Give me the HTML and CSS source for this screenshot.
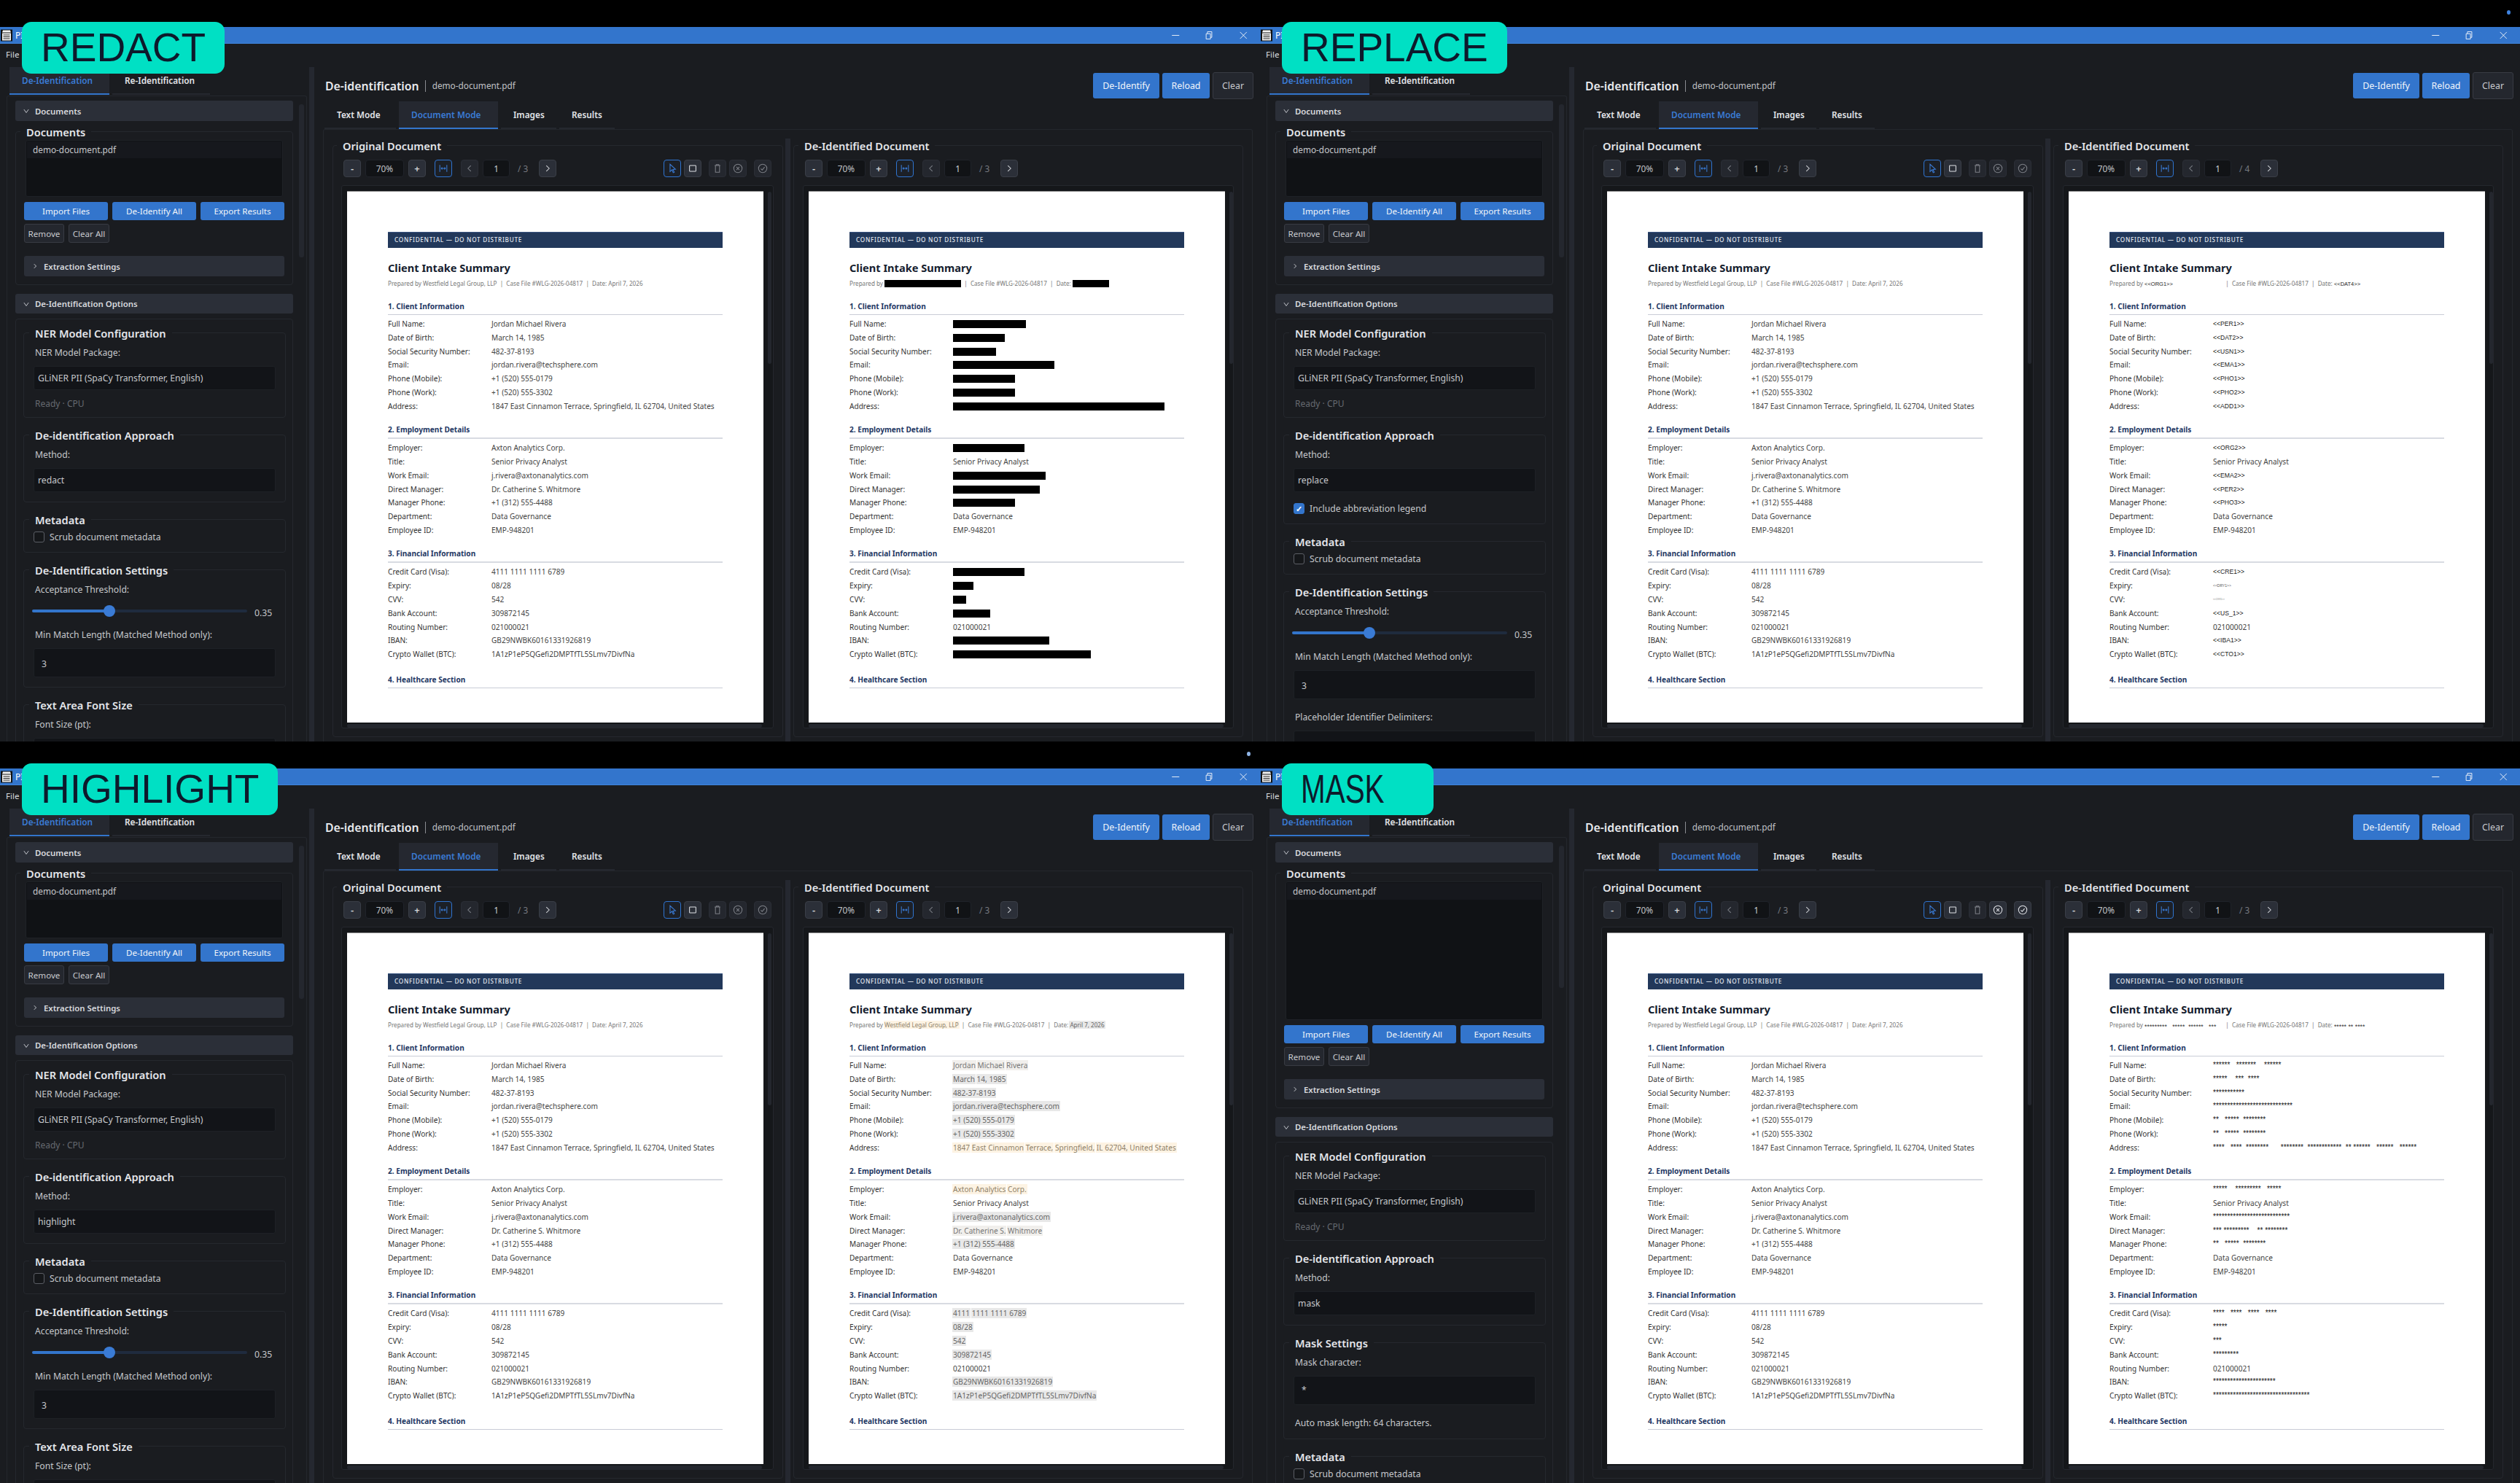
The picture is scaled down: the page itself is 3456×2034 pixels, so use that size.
FILE: index.html
```html
<!DOCTYPE html>
<html lang="en">
<head>
<meta charset="utf-8">
<title>De-identification methods</title>
<link rel="stylesheet" href="styles.css">
</head>
<body>
<svg class="sprite" aria-hidden="true">
<symbol id="fit" viewBox="0 0 16 16"><path d="M2.5 2.5v11M13.5 2.5v11M4.5 8h7M4.5 8l1.8-1.6M4.5 8l1.8 1.6M11.5 8L9.700 6.400M11.500 8L9.700 9.600"/></symbol>
<symbol id="cur" viewBox="0 0 16 16"><path d="M4.500 1.500v11.500l3-2.800 2 4.500 1.600-.7-2-4.300 3.900-.4z"/></symbol>
<symbol id="rct" viewBox="0 0 16 16"><rect x="3" y="3.500" width="10" height="9" rx=".8"/></symbol>
<symbol id="trh" viewBox="0 0 16 16"><path d="M3.500 3.500h9M6 3.500V2h4v1.500M4.800 3.500V14h6.400V3.500"/></symbol>
<symbol id="xc" viewBox="0 0 16 16"><circle cx="8" cy="8" r="6.500"/><path d="M5.700 5.700l4.600 4.600M10.300 5.700l-4.600 4.600"/></symbol>
<symbol id="cc" viewBox="0 0 16 16"><circle cx="8" cy="8" r="6.500"/><path d="M5 8.300l2.200 2.200L11 5.800"/></symbol>
<symbol id="lt" viewBox="0 0 16 16"><path d="M10 3.500L5.500 8l4.500 4.500"/></symbol>
<symbol id="gt" viewBox="0 0 16 16"><path d="M6 3.500L10.500 8 6 12.500"/></symbol>
<symbol id="dn" viewBox="0 0 16 16"><path d="M3 5l5 7 5-7"/></symbol>
<symbol id="min" viewBox="0 0 12 12"><path d="M.500 6h11"/></symbol>
<symbol id="res" viewBox="0 0 12 12"><path d="M1.500 3.500h6.500v8H1.500zM3.500 3.500V.500h6.500v8.500H8"/></symbol>
<symbol id="cls" viewBox="0 0 12 12"><path d="M1 1l10 10M11 1L1 11"/></symbol>
<symbol id="app" viewBox="0 0 16 16"><path class="app-b" d="M0 0h16v16H0z"/><path class="app-w" d="M3 1h10l1 3H2zM2 5h12v10H2z"/><path class="app-l" d="M3.500 7.500h9M3.500 10h9M3.500 12.500h9"/></symbol>
</svg>
<main class="app">

<section class="win">
<div class="label">REDACT</div>
<header class="tbar"><svg class="appic"><use href="#app"/></svg><span class="ttl">PI</span><div class="wc"><svg><use href="#min"/></svg><svg><use href="#res"/></svg><svg><use href="#cls"/></svg></div></header>
<div class="menu">File</div>
<div class="main">
<aside class="side">
<div class="stabs"><div class="tab act">De-Identification</div><div class="tab">Re-Identification</div></div>
<div class="sframe"><div class="sscroll">
<div class="head"><svg class="chev"><use href="#dn"/></svg>Documents</div>
<div class="grp docs"><div class="gt">Documents</div>
<div class="list"><div class="li">demo-document.pdf</div></div>
<div class="brow"><button class="btn pri">Import Files</button><button class="btn pri">De-Identify All</button><button class="btn pri">Export Results</button></div>
<div class="brow2"><button class="btn sec rm">Remove</button><button class="btn sec ca">Clear All</button></div>
<div class="head sub"><svg class="chev"><use href="#gt"/></svg>Extraction Settings</div>
</div>
<div class="head opt"><svg class="chev"><use href="#dn"/></svg>De-Identification Options</div>
<div class="grp big">
<div class="grp in ner"><div class="gt">NER Model Configuration</div><div class="lb">NER Model Package:</div><div class="cb">GLiNER PII (SpaCy Transformer, English)</div><div class="note">Ready · CPU</div></div>
<div class="grp in"><div class="gt">De-identification Approach</div><div class="lb">Method:</div><div class="cb">redact</div></div>
<div class="grp in"><div class="gt">Metadata</div><label class="ck"><span class="box"></span>Scrub document metadata</label></div>
<div class="grp in"><div class="gt">De-Identification Settings</div><div class="lb">Acceptance Threshold:</div>
<div class="sl"><div class="track"><div class="fill"></div><div class="knob"></div></div><span class="val">0.35</span></div>
<div class="lb ml">Min Match Length (Matched Method only):</div><div class="cb tall">3</div></div>
<div class="grp in"><div class="gt">Text Area Font Size</div><div class="lb">Font Size (pt):</div><div class="cb tall">10</div></div>
</div>
</div><div class="sb"></div></div>
</aside>
<div class="split"></div>
<div class="content">
<div class="chead"><h1 class="ctitle">De-identification</h1><span class="cfile">demo-document.pdf</span><div class="acts"><button class="btn pri big1">De-Identify</button><button class="btn pri big2">Reload</button><button class="btn sec big3">Clear</button></div></div>
<nav class="ctabs"><div class="tab">Text Mode</div><div class="tab act">Document Mode</div><div class="tab">Images</div><div class="tab">Results</div></nav>
<div class="frame">
<div class="vg"><div class="gt">Original Document</div>
<div class="tb"><button class="tbtn">-</button><span class="zf">70%</span><button class="tbtn">+</button><button class="tbtn on gp"><svg><use href="#fit"/></svg></button><button class="tbtn dim gp"><svg><use href="#lt"/></svg></button><span class="pg">1</span><span class="cnt">/ 3</span><button class="tbtn"><svg><use href="#gt"/></svg></button><div class="tr"><button class="tbtn on"><svg><use href="#cur"/></svg></button><button class="tbtn lit"><svg><use href="#rct"/></svg></button><button class="tbtn dim gp"><svg><use href="#trh"/></svg></button><button class="tbtn dim"><svg><use href="#xc"/></svg></button><button class="tbtn dim gp"><svg><use href="#cc"/></svg></button></div></div>
<div class="view"><div class="vrow"><article class="page"><div class="ban">CONFIDENTIAL — DO NOT DISTRIBUTE</div><h2 class="dt">Client Intake Summary</h2><p class="ds">Prepared by Westfield Legal Group, LLP &nbsp;|&nbsp; Case File #WLG-2026-04817 &nbsp;|&nbsp; Date: April 7, 2026</p>
<h3 class="sec1">1. Client Information</h3><dl class="rows"><dt>Full Name:</dt><dd>Jordan Michael Rivera</dd><dt>Date of Birth:</dt><dd>March 14, 1985</dd><dt>Social Security Number:</dt><dd>482-37-8193</dd><dt>Email:</dt><dd>jordan.rivera@techsphere.com</dd><dt>Phone (Mobile):</dt><dd>+1 (520) 555-0179</dd><dt>Phone (Work):</dt><dd>+1 (520) 555-3302</dd><dt>Address:</dt><dd>1847 East Cinnamon Terrace, Springfield, IL 62704, United States</dd></dl>
<h3>2. Employment Details</h3><dl class="rows"><dt>Employer:</dt><dd>Axton Analytics Corp.</dd><dt>Title:</dt><dd>Senior Privacy Analyst</dd><dt>Work Email:</dt><dd>j.rivera@axtonanalytics.com</dd><dt>Direct Manager:</dt><dd>Dr. Catherine S. Whitmore</dd><dt>Manager Phone:</dt><dd>+1 (312) 555-4488</dd><dt>Department:</dt><dd>Data Governance</dd><dt>Employee ID:</dt><dd>EMP-948201</dd></dl>
<h3>3. Financial Information</h3><dl class="rows"><dt>Credit Card (Visa):</dt><dd>4111 1111 1111 6789</dd><dt>Expiry:</dt><dd>08/28</dd><dt>CVV:</dt><dd>542</dd><dt>Bank Account:</dt><dd>309872145</dd><dt>Routing Number:</dt><dd>021000021</dd><dt>IBAN:</dt><dd>GB29NWBK60161331926819</dd><dt>Crypto Wallet (BTC):</dt><dd>1A1zP1eP5QGefi2DMPTfTL5SLmv7DivfNa</dd></dl>
<h3 class="sec1">4. Healthcare Section</h3></article><div class="vs"></div></div><div class="hs"></div></div></div>
<div class="vsplit"></div>
<div class="vg"><div class="gt">De-Identified Document</div>
<div class="tb"><button class="tbtn">-</button><span class="zf">70%</span><button class="tbtn">+</button><button class="tbtn on gp"><svg><use href="#fit"/></svg></button><button class="tbtn dim gp"><svg><use href="#lt"/></svg></button><span class="pg">1</span><span class="cnt">/ 3</span><button class="tbtn"><svg><use href="#gt"/></svg></button></div>
<div class="view"><div class="vrow"><article class="page"><div class="ban">CONFIDENTIAL — DO NOT DISTRIBUTE</div><h2 class="dt">Client Intake Summary</h2><p class="ds">Prepared by <span class="bar" style="width:105px"></span> &nbsp;|&nbsp; Case File #WLG-2026-04817 &nbsp;|&nbsp; Date: <span class="bar" style="width:50px"></span></p>
<h3 class="sec1">1. Client Information</h3><dl class="rows"><dt>Full Name:</dt><dd><span class="bar" style="width:100px"></span></dd><dt>Date of Birth:</dt><dd><span class="bar" style="width:71px"></span></dd><dt>Social Security Number:</dt><dd><span class="bar" style="width:59px"></span></dd><dt>Email:</dt><dd><span class="bar" style="width:139px"></span></dd><dt>Phone (Mobile):</dt><dd><span class="bar" style="width:85px"></span></dd><dt>Phone (Work):</dt><dd><span class="bar" style="width:85px"></span></dd><dt>Address:</dt><dd><span class="bar" style="width:290px"></span></dd></dl>
<h3>2. Employment Details</h3><dl class="rows"><dt>Employer:</dt><dd><span class="bar" style="width:98px"></span></dd><dt>Title:</dt><dd>Senior Privacy Analyst</dd><dt>Work Email:</dt><dd><span class="bar" style="width:127px"></span></dd><dt>Direct Manager:</dt><dd><span class="bar" style="width:119px"></span></dd><dt>Manager Phone:</dt><dd><span class="bar" style="width:85px"></span></dd><dt>Department:</dt><dd>Data Governance</dd><dt>Employee ID:</dt><dd>EMP-948201</dd></dl>
<h3>3. Financial Information</h3><dl class="rows"><dt>Credit Card (Visa):</dt><dd><span class="bar" style="width:98px"></span></dd><dt>Expiry:</dt><dd><span class="bar" style="width:28px"></span></dd><dt>CVV:</dt><dd><span class="bar" style="width:18px"></span></dd><dt>Bank Account:</dt><dd><span class="bar" style="width:51px"></span></dd><dt>Routing Number:</dt><dd>021000021</dd><dt>IBAN:</dt><dd><span class="bar" style="width:132px"></span></dd><dt>Crypto Wallet (BTC):</dt><dd><span class="bar" style="width:189px"></span></dd></dl>
<h3 class="sec1">4. Healthcare Section</h3></article><div class="vs"></div></div><div class="hs"></div></div></div>
</div>
</div>
</div>
</section>

<section class="win">
<div class="label">REPLACE</div><span class="dot"></span>
<header class="tbar"><svg class="appic"><use href="#app"/></svg><span class="ttl">PI</span><div class="wc"><svg><use href="#min"/></svg><svg><use href="#res"/></svg><svg><use href="#cls"/></svg></div></header>
<div class="menu">File</div>
<div class="main">
<aside class="side">
<div class="stabs"><div class="tab act">De-Identification</div><div class="tab">Re-Identification</div></div>
<div class="sframe"><div class="sscroll">
<div class="head"><svg class="chev"><use href="#dn"/></svg>Documents</div>
<div class="grp docs"><div class="gt">Documents</div>
<div class="list"><div class="li">demo-document.pdf</div></div>
<div class="brow"><button class="btn pri">Import Files</button><button class="btn pri">De-Identify All</button><button class="btn pri">Export Results</button></div>
<div class="brow2"><button class="btn sec rm">Remove</button><button class="btn sec ca">Clear All</button></div>
<div class="head sub"><svg class="chev"><use href="#gt"/></svg>Extraction Settings</div>
</div>
<div class="head opt"><svg class="chev"><use href="#dn"/></svg>De-Identification Options</div>
<div class="grp big">
<div class="grp in ner"><div class="gt">NER Model Configuration</div><div class="lb">NER Model Package:</div><div class="cb">GLiNER PII (SpaCy Transformer, English)</div><div class="note">Ready · CPU</div></div>
<div class="grp in"><div class="gt">De-identification Approach</div><div class="lb">Method:</div><div class="cb">replace</div><label class="ck leg"><span class="box on">✓</span>Include abbreviation legend</label></div>
<div class="grp in"><div class="gt">Metadata</div><label class="ck"><span class="box"></span>Scrub document metadata</label></div>
<div class="grp in"><div class="gt">De-Identification Settings</div><div class="lb">Acceptance Threshold:</div>
<div class="sl"><div class="track"><div class="fill"></div><div class="knob"></div></div><span class="val">0.35</span></div>
<div class="lb ml">Min Match Length (Matched Method only):</div><div class="cb tall">3</div>
<div class="lb ml">Placeholder Identifier Delimiters:</div><div class="cb tall">Full format</div></div>
</div>
</div><div class="sb"></div></div>
</aside>
<div class="split"></div>
<div class="content">
<div class="chead"><h1 class="ctitle">De-identification</h1><span class="cfile">demo-document.pdf</span><div class="acts"><button class="btn pri big1">De-Identify</button><button class="btn pri big2">Reload</button><button class="btn sec big3">Clear</button></div></div>
<nav class="ctabs"><div class="tab">Text Mode</div><div class="tab act">Document Mode</div><div class="tab">Images</div><div class="tab">Results</div></nav>
<div class="frame">
<div class="vg"><div class="gt">Original Document</div>
<div class="tb"><button class="tbtn">-</button><span class="zf">70%</span><button class="tbtn">+</button><button class="tbtn on gp"><svg><use href="#fit"/></svg></button><button class="tbtn dim gp"><svg><use href="#lt"/></svg></button><span class="pg">1</span><span class="cnt">/ 3</span><button class="tbtn"><svg><use href="#gt"/></svg></button><div class="tr"><button class="tbtn on"><svg><use href="#cur"/></svg></button><button class="tbtn lit"><svg><use href="#rct"/></svg></button><button class="tbtn dim gp"><svg><use href="#trh"/></svg></button><button class="tbtn dim"><svg><use href="#xc"/></svg></button><button class="tbtn dim gp"><svg><use href="#cc"/></svg></button></div></div>
<div class="view"><div class="vrow"><article class="page"><div class="ban">CONFIDENTIAL — DO NOT DISTRIBUTE</div><h2 class="dt">Client Intake Summary</h2><p class="ds">Prepared by Westfield Legal Group, LLP &nbsp;|&nbsp; Case File #WLG-2026-04817 &nbsp;|&nbsp; Date: April 7, 2026</p>
<h3 class="sec1">1. Client Information</h3><dl class="rows"><dt>Full Name:</dt><dd>Jordan Michael Rivera</dd><dt>Date of Birth:</dt><dd>March 14, 1985</dd><dt>Social Security Number:</dt><dd>482-37-8193</dd><dt>Email:</dt><dd>jordan.rivera@techsphere.com</dd><dt>Phone (Mobile):</dt><dd>+1 (520) 555-0179</dd><dt>Phone (Work):</dt><dd>+1 (520) 555-3302</dd><dt>Address:</dt><dd>1847 East Cinnamon Terrace, Springfield, IL 62704, United States</dd></dl>
<h3>2. Employment Details</h3><dl class="rows"><dt>Employer:</dt><dd>Axton Analytics Corp.</dd><dt>Title:</dt><dd>Senior Privacy Analyst</dd><dt>Work Email:</dt><dd>j.rivera@axtonanalytics.com</dd><dt>Direct Manager:</dt><dd>Dr. Catherine S. Whitmore</dd><dt>Manager Phone:</dt><dd>+1 (312) 555-4488</dd><dt>Department:</dt><dd>Data Governance</dd><dt>Employee ID:</dt><dd>EMP-948201</dd></dl>
<h3>3. Financial Information</h3><dl class="rows"><dt>Credit Card (Visa):</dt><dd>4111 1111 1111 6789</dd><dt>Expiry:</dt><dd>08/28</dd><dt>CVV:</dt><dd>542</dd><dt>Bank Account:</dt><dd>309872145</dd><dt>Routing Number:</dt><dd>021000021</dd><dt>IBAN:</dt><dd>GB29NWBK60161331926819</dd><dt>Crypto Wallet (BTC):</dt><dd>1A1zP1eP5QGefi2DMPTfTL5SLmv7DivfNa</dd></dl>
<h3 class="sec1">4. Healthcare Section</h3></article><div class="vs"></div></div><div class="hs"></div></div></div>
<div class="vsplit"></div>
<div class="vg"><div class="gt">De-Identified Document</div>
<div class="tb"><button class="tbtn">-</button><span class="zf">70%</span><button class="tbtn">+</button><button class="tbtn on gp"><svg><use href="#fit"/></svg></button><button class="tbtn dim gp"><svg><use href="#lt"/></svg></button><span class="pg">1</span><span class="cnt">/ 4</span><button class="tbtn"><svg><use href="#gt"/></svg></button></div>
<div class="view"><div class="vrow"><article class="page"><div class="ban">CONFIDENTIAL — DO NOT DISTRIBUTE</div><h2 class="dt">Client Intake Summary</h2><p class="ds">Prepared by <span class="slot ph ph7">&lt;&lt;ORG1&gt;&gt;</span> &nbsp;|&nbsp; Case File #WLG-2026-04817 &nbsp;|&nbsp; Date: <span class="ph ph7">&lt;&lt;DAT4&gt;&gt;</span></p>
<h3 class="sec1">1. Client Information</h3><dl class="rows"><dt>Full Name:</dt><dd class="ph">&lt;&lt;PER1&gt;&gt;</dd><dt>Date of Birth:</dt><dd class="ph">&lt;&lt;DAT2&gt;&gt;</dd><dt>Social Security Number:</dt><dd class="ph">&lt;&lt;USN1&gt;&gt;</dd><dt>Email:</dt><dd class="ph">&lt;&lt;EMA1&gt;&gt;</dd><dt>Phone (Mobile):</dt><dd class="ph">&lt;&lt;PHO1&gt;&gt;</dd><dt>Phone (Work):</dt><dd class="ph">&lt;&lt;PHO2&gt;&gt;</dd><dt>Address:</dt><dd class="ph">&lt;&lt;ADD1&gt;&gt;</dd></dl>
<h3>2. Employment Details</h3><dl class="rows"><dt>Employer:</dt><dd class="ph">&lt;&lt;ORG2&gt;&gt;</dd><dt>Title:</dt><dd>Senior Privacy Analyst</dd><dt>Work Email:</dt><dd class="ph">&lt;&lt;EMA2&gt;&gt;</dd><dt>Direct Manager:</dt><dd class="ph">&lt;&lt;PER2&gt;&gt;</dd><dt>Manager Phone:</dt><dd class="ph">&lt;&lt;PHO3&gt;&gt;</dd><dt>Department:</dt><dd>Data Governance</dd><dt>Employee ID:</dt><dd>EMP-948201</dd></dl>
<h3>3. Financial Information</h3><dl class="rows"><dt>Credit Card (Visa):</dt><dd class="ph">&lt;&lt;CRE1&gt;&gt;</dd><dt>Expiry:</dt><dd class="ph ph5">&lt;&lt;DRY1&gt;&gt;</dd><dt>CVV:</dt><dd class="ph ph3">&lt;&lt;CVV1&gt;&gt;</dd><dt>Bank Account:</dt><dd class="ph">&lt;&lt;US_1&gt;&gt;</dd><dt>Routing Number:</dt><dd>021000021</dd><dt>IBAN:</dt><dd class="ph">&lt;&lt;IBA1&gt;&gt;</dd><dt>Crypto Wallet (BTC):</dt><dd class="ph">&lt;&lt;CTO1&gt;&gt;</dd></dl>
<h3 class="sec1">4. Healthcare Section</h3></article><div class="vs"></div></div><div class="hs"></div></div></div>
</div>
</div>
</div>
</section>

<section class="win">
<div class="label">HIGHLIGHT</div><span class="dot d3"></span>
<header class="tbar"><svg class="appic"><use href="#app"/></svg><span class="ttl">PI</span><div class="wc"><svg><use href="#min"/></svg><svg><use href="#res"/></svg><svg><use href="#cls"/></svg></div></header>
<div class="menu">File</div>
<div class="main">
<aside class="side">
<div class="stabs"><div class="tab act">De-Identification</div><div class="tab">Re-Identification</div></div>
<div class="sframe"><div class="sscroll">
<div class="head"><svg class="chev"><use href="#dn"/></svg>Documents</div>
<div class="grp docs"><div class="gt">Documents</div>
<div class="list"><div class="li">demo-document.pdf</div></div>
<div class="brow"><button class="btn pri">Import Files</button><button class="btn pri">De-Identify All</button><button class="btn pri">Export Results</button></div>
<div class="brow2"><button class="btn sec rm">Remove</button><button class="btn sec ca">Clear All</button></div>
<div class="head sub"><svg class="chev"><use href="#gt"/></svg>Extraction Settings</div>
</div>
<div class="head opt"><svg class="chev"><use href="#dn"/></svg>De-Identification Options</div>
<div class="grp big">
<div class="grp in ner"><div class="gt">NER Model Configuration</div><div class="lb">NER Model Package:</div><div class="cb">GLiNER PII (SpaCy Transformer, English)</div><div class="note">Ready · CPU</div></div>
<div class="grp in"><div class="gt">De-identification Approach</div><div class="lb">Method:</div><div class="cb">highlight</div></div>
<div class="grp in"><div class="gt">Metadata</div><label class="ck"><span class="box"></span>Scrub document metadata</label></div>
<div class="grp in"><div class="gt">De-Identification Settings</div><div class="lb">Acceptance Threshold:</div>
<div class="sl"><div class="track"><div class="fill"></div><div class="knob"></div></div><span class="val">0.35</span></div>
<div class="lb ml">Min Match Length (Matched Method only):</div><div class="cb tall">3</div></div>
<div class="grp in"><div class="gt">Text Area Font Size</div><div class="lb">Font Size (pt):</div><div class="cb tall">10</div></div>
</div>
</div><div class="sb"></div></div>
</aside>
<div class="split"></div>
<div class="content">
<div class="chead"><h1 class="ctitle">De-identification</h1><span class="cfile">demo-document.pdf</span><div class="acts"><button class="btn pri big1">De-Identify</button><button class="btn pri big2">Reload</button><button class="btn sec big3">Clear</button></div></div>
<nav class="ctabs"><div class="tab">Text Mode</div><div class="tab act">Document Mode</div><div class="tab">Images</div><div class="tab">Results</div></nav>
<div class="frame">
<div class="vg"><div class="gt">Original Document</div>
<div class="tb"><button class="tbtn">-</button><span class="zf">70%</span><button class="tbtn">+</button><button class="tbtn on gp"><svg><use href="#fit"/></svg></button><button class="tbtn dim gp"><svg><use href="#lt"/></svg></button><span class="pg">1</span><span class="cnt">/ 3</span><button class="tbtn"><svg><use href="#gt"/></svg></button><div class="tr"><button class="tbtn on"><svg><use href="#cur"/></svg></button><button class="tbtn lit"><svg><use href="#rct"/></svg></button><button class="tbtn dim gp"><svg><use href="#trh"/></svg></button><button class="tbtn dim"><svg><use href="#xc"/></svg></button><button class="tbtn dim gp"><svg><use href="#cc"/></svg></button></div></div>
<div class="view"><div class="vrow"><article class="page"><div class="ban">CONFIDENTIAL — DO NOT DISTRIBUTE</div><h2 class="dt">Client Intake Summary</h2><p class="ds">Prepared by Westfield Legal Group, LLP &nbsp;|&nbsp; Case File #WLG-2026-04817 &nbsp;|&nbsp; Date: April 7, 2026</p>
<h3 class="sec1">1. Client Information</h3><dl class="rows"><dt>Full Name:</dt><dd>Jordan Michael Rivera</dd><dt>Date of Birth:</dt><dd>March 14, 1985</dd><dt>Social Security Number:</dt><dd>482-37-8193</dd><dt>Email:</dt><dd>jordan.rivera@techsphere.com</dd><dt>Phone (Mobile):</dt><dd>+1 (520) 555-0179</dd><dt>Phone (Work):</dt><dd>+1 (520) 555-3302</dd><dt>Address:</dt><dd>1847 East Cinnamon Terrace, Springfield, IL 62704, United States</dd></dl>
<h3>2. Employment Details</h3><dl class="rows"><dt>Employer:</dt><dd>Axton Analytics Corp.</dd><dt>Title:</dt><dd>Senior Privacy Analyst</dd><dt>Work Email:</dt><dd>j.rivera@axtonanalytics.com</dd><dt>Direct Manager:</dt><dd>Dr. Catherine S. Whitmore</dd><dt>Manager Phone:</dt><dd>+1 (312) 555-4488</dd><dt>Department:</dt><dd>Data Governance</dd><dt>Employee ID:</dt><dd>EMP-948201</dd></dl>
<h3>3. Financial Information</h3><dl class="rows"><dt>Credit Card (Visa):</dt><dd>4111 1111 1111 6789</dd><dt>Expiry:</dt><dd>08/28</dd><dt>CVV:</dt><dd>542</dd><dt>Bank Account:</dt><dd>309872145</dd><dt>Routing Number:</dt><dd>021000021</dd><dt>IBAN:</dt><dd>GB29NWBK60161331926819</dd><dt>Crypto Wallet (BTC):</dt><dd>1A1zP1eP5QGefi2DMPTfTL5SLmv7DivfNa</dd></dl>
<h3 class="sec1">4. Healthcare Section</h3></article><div class="vs"></div></div><div class="hs"></div></div></div>
<div class="vsplit"></div>
<div class="vg"><div class="gt">De-Identified Document</div>
<div class="tb"><button class="tbtn">-</button><span class="zf">70%</span><button class="tbtn">+</button><button class="tbtn on gp"><svg><use href="#fit"/></svg></button><button class="tbtn dim gp"><svg><use href="#lt"/></svg></button><span class="pg">1</span><span class="cnt">/ 3</span><button class="tbtn"><svg><use href="#gt"/></svg></button></div>
<div class="view"><div class="vrow"><article class="page"><div class="ban">CONFIDENTIAL — DO NOT DISTRIBUTE</div><h2 class="dt">Client Intake Summary</h2><p class="ds">Prepared by <mark class="o">Westfield</mark> <mark class="o">Legal</mark> <mark class="o">Group,</mark> <mark class="o">LLP</mark> &nbsp;|&nbsp; Case File #WLG-2026-04817 &nbsp;|&nbsp; Date: <mark class="g">April</mark> <mark class="g">7,</mark> <mark class="g">2026</mark></p>
<h3 class="sec1">1. Client Information</h3><dl class="rows"><dt>Full Name:</dt><dd><mark class="n">Jordan</mark> <mark class="n">Michael</mark> <mark class="n">Rivera</mark></dd><dt>Date of Birth:</dt><dd><mark class="g">March</mark> <mark class="g">14,</mark> <mark class="g">1985</mark></dd><dt>Social Security Number:</dt><dd><mark class="g">482-37-8193</mark></dd><dt>Email:</dt><dd><mark class="g">jordan.rivera@techsphere.com</mark></dd><dt>Phone (Mobile):</dt><dd><mark class="g">+1</mark> <mark class="g">(520)</mark> <mark class="g">555-0179</mark></dd><dt>Phone (Work):</dt><dd><mark class="g">+1</mark> <mark class="g">(520)</mark> <mark class="g">555-3302</mark></dd><dt>Address:</dt><dd><mark class="o">1847</mark> <mark class="o">East</mark> <mark class="o">Cinnamon</mark> <mark class="o">Terrace,</mark> <mark class="o">Springfield,</mark> <mark class="o">IL</mark> <mark class="o">62704,</mark> <mark class="o">United</mark> <mark class="o">States</mark></dd></dl>
<h3>2. Employment Details</h3><dl class="rows"><dt>Employer:</dt><dd><mark class="o">Axton</mark> <mark class="o">Analytics</mark> <mark class="o">Corp.</mark></dd><dt>Title:</dt><dd>Senior Privacy Analyst</dd><dt>Work Email:</dt><dd><mark class="g">j.rivera@axtonanalytics.com</mark></dd><dt>Direct Manager:</dt><dd><mark class="n">Dr.</mark> <mark class="n">Catherine</mark> <mark class="n">S.</mark> <mark class="n">Whitmore</mark></dd><dt>Manager Phone:</dt><dd><mark class="g">+1</mark> <mark class="g">(312)</mark> <mark class="g">555-4488</mark></dd><dt>Department:</dt><dd>Data Governance</dd><dt>Employee ID:</dt><dd>EMP-948201</dd></dl>
<h3>3. Financial Information</h3><dl class="rows"><dt>Credit Card (Visa):</dt><dd><mark class="g">4111</mark> <mark class="g">1111</mark> <mark class="g">1111</mark> <mark class="g">6789</mark></dd><dt>Expiry:</dt><dd><mark class="g">08/28</mark></dd><dt>CVV:</dt><dd><mark class="g">542</mark></dd><dt>Bank Account:</dt><dd><mark class="g">309872145</mark></dd><dt>Routing Number:</dt><dd>021000021</dd><dt>IBAN:</dt><dd><mark class="g">GB29NWBK60161331926819</mark></dd><dt>Crypto Wallet (BTC):</dt><dd><mark class="g">1A1zP1eP5QGefi2DMPTfTL5SLmv7DivfNa</mark></dd></dl>
<h3 class="sec1">4. Healthcare Section</h3></article><div class="vs"></div></div><div class="hs"></div></div></div>
</div>
</div>
</div>
</section>

<section class="win">
<div class="label lnarrow"><span>MASK</span></div>
<header class="tbar"><svg class="appic"><use href="#app"/></svg><span class="ttl">PI</span><div class="wc"><svg><use href="#min"/></svg><svg><use href="#res"/></svg><svg><use href="#cls"/></svg></div></header>
<div class="menu">File</div>
<div class="main">
<aside class="side">
<div class="stabs"><div class="tab act">De-Identification</div><div class="tab">Re-Identification</div></div>
<div class="sframe"><div class="sscroll">
<div class="head"><svg class="chev"><use href="#dn"/></svg>Documents</div>
<div class="grp docs"><div class="gt">Documents</div>
<div class="list tall-list"><div class="li">demo-document.pdf</div></div>
<div class="brow"><button class="btn pri">Import Files</button><button class="btn pri">De-Identify All</button><button class="btn pri">Export Results</button></div>
<div class="brow2"><button class="btn sec rm">Remove</button><button class="btn sec ca">Clear All</button></div>
<div class="head sub"><svg class="chev"><use href="#gt"/></svg>Extraction Settings</div>
</div>
<div class="head opt"><svg class="chev"><use href="#dn"/></svg>De-Identification Options</div>
<div class="grp big">
<div class="grp in ner"><div class="gt">NER Model Configuration</div><div class="lb">NER Model Package:</div><div class="cb">GLiNER PII (SpaCy Transformer, English)</div><div class="note">Ready · CPU</div></div>
<div class="grp in"><div class="gt">De-identification Approach</div><div class="lb">Method:</div><div class="cb">mask</div></div>
<div class="grp in"><div class="gt">Mask Settings</div><div class="lb">Mask character:</div><div class="cb mc">*</div><div class="lb autom">Auto mask length: 64 characters.</div></div>
<div class="grp in"><div class="gt">Metadata</div><label class="ck"><span class="box"></span>Scrub document metadata</label></div>
</div>
</div><div class="sb sb-s"></div></div>
</aside>
<div class="split"></div>
<div class="content">
<div class="chead"><h1 class="ctitle">De-identification</h1><span class="cfile">demo-document.pdf</span><div class="acts"><button class="btn pri big1">De-Identify</button><button class="btn pri big2">Reload</button><button class="btn sec big3">Clear</button></div></div>
<nav class="ctabs"><div class="tab">Text Mode</div><div class="tab act">Document Mode</div><div class="tab">Images</div><div class="tab">Results</div></nav>
<div class="frame">
<div class="vg"><div class="gt">Original Document</div>
<div class="tb"><button class="tbtn">-</button><span class="zf">70%</span><button class="tbtn">+</button><button class="tbtn on gp"><svg><use href="#fit"/></svg></button><button class="tbtn dim gp"><svg><use href="#lt"/></svg></button><span class="pg">1</span><span class="cnt">/ 3</span><button class="tbtn"><svg><use href="#gt"/></svg></button><div class="tr"><button class="tbtn on"><svg><use href="#cur"/></svg></button><button class="tbtn lit"><svg><use href="#rct"/></svg></button><button class="tbtn dim gp"><svg><use href="#trh"/></svg></button><button class="tbtn lit"><svg><use href="#xc"/></svg></button><button class="tbtn lit gp"><svg><use href="#cc"/></svg></button></div></div>
<div class="view"><div class="vrow"><article class="page"><div class="ban">CONFIDENTIAL — DO NOT DISTRIBUTE</div><h2 class="dt">Client Intake Summary</h2><p class="ds">Prepared by Westfield Legal Group, LLP &nbsp;|&nbsp; Case File #WLG-2026-04817 &nbsp;|&nbsp; Date: April 7, 2026</p>
<h3 class="sec1">1. Client Information</h3><dl class="rows"><dt>Full Name:</dt><dd>Jordan Michael Rivera</dd><dt>Date of Birth:</dt><dd>March 14, 1985</dd><dt>Social Security Number:</dt><dd>482-37-8193</dd><dt>Email:</dt><dd>jordan.rivera@techsphere.com</dd><dt>Phone (Mobile):</dt><dd>+1 (520) 555-0179</dd><dt>Phone (Work):</dt><dd>+1 (520) 555-3302</dd><dt>Address:</dt><dd>1847 East Cinnamon Terrace, Springfield, IL 62704, United States</dd></dl>
<h3>2. Employment Details</h3><dl class="rows"><dt>Employer:</dt><dd>Axton Analytics Corp.</dd><dt>Title:</dt><dd>Senior Privacy Analyst</dd><dt>Work Email:</dt><dd>j.rivera@axtonanalytics.com</dd><dt>Direct Manager:</dt><dd>Dr. Catherine S. Whitmore</dd><dt>Manager Phone:</dt><dd>+1 (312) 555-4488</dd><dt>Department:</dt><dd>Data Governance</dd><dt>Employee ID:</dt><dd>EMP-948201</dd></dl>
<h3>3. Financial Information</h3><dl class="rows"><dt>Credit Card (Visa):</dt><dd>4111 1111 1111 6789</dd><dt>Expiry:</dt><dd>08/28</dd><dt>CVV:</dt><dd>542</dd><dt>Bank Account:</dt><dd>309872145</dd><dt>Routing Number:</dt><dd>021000021</dd><dt>IBAN:</dt><dd>GB29NWBK60161331926819</dd><dt>Crypto Wallet (BTC):</dt><dd>1A1zP1eP5QGefi2DMPTfTL5SLmv7DivfNa</dd></dl>
<h3 class="sec1">4. Healthcare Section</h3></article><div class="vs"></div></div><div class="hs"></div></div></div>
<div class="vsplit"></div>
<div class="vg"><div class="gt">De-Identified Document</div>
<div class="tb"><button class="tbtn">-</button><span class="zf">70%</span><button class="tbtn">+</button><button class="tbtn on gp"><svg><use href="#fit"/></svg></button><button class="tbtn dim gp"><svg><use href="#lt"/></svg></button><span class="pg">1</span><span class="cnt">/ 3</span><button class="tbtn"><svg><use href="#gt"/></svg></button></div>
<div class="view"><div class="vrow"><article class="page"><div class="ban">CONFIDENTIAL — DO NOT DISTRIBUTE</div><h2 class="dt">Client Intake Summary</h2><p class="ds">Prepared by <span class="slot mk mk-s">*********   *****  ******   ***</span> &nbsp;|&nbsp; Case File #WLG-2026-04817 &nbsp;|&nbsp; Date: <span class="mk mk-s">***** ** ****</span></p>
<h3 class="sec1">1. Client Information</h3><dl class="rows"><dt>Full Name:</dt><dd class="mk">******   *******    ******</dd><dt>Date of Birth:</dt><dd class="mk">*****    ***  ****</dd><dt>Social Security Number:</dt><dd class="mk">***********</dd><dt>Email:</dt><dd class="mk">****************************</dd><dt>Phone (Mobile):</dt><dd class="mk">**   *****  ********</dd><dt>Phone (Work):</dt><dd class="mk">**   *****  ********</dd><dt>Address:</dt><dd class="mk">****   ****  ********      ********  ************  ** ******   ******   ******</dd></dl>
<h3>2. Employment Details</h3><dl class="rows"><dt>Employer:</dt><dd class="mk">*****    *********   *****</dd><dt>Title:</dt><dd>Senior Privacy Analyst</dd><dt>Work Email:</dt><dd class="mk">***************************</dd><dt>Direct Manager:</dt><dd class="mk">*** *********    ** ********</dd><dt>Manager Phone:</dt><dd class="mk">**   *****  ********</dd><dt>Department:</dt><dd>Data Governance</dd><dt>Employee ID:</dt><dd>EMP-948201</dd></dl>
<h3>3. Financial Information</h3><dl class="rows"><dt>Credit Card (Visa):</dt><dd class="mk">****   ****   ****   ****</dd><dt>Expiry:</dt><dd class="mk">*****</dd><dt>CVV:</dt><dd class="mk">***</dd><dt>Bank Account:</dt><dd class="mk">*********</dd><dt>Routing Number:</dt><dd>021000021</dd><dt>IBAN:</dt><dd class="mk">**********************</dd><dt>Crypto Wallet (BTC):</dt><dd class="mk">**********************************</dd></dl>
<h3 class="sec1">4. Healthcare Section</h3></article><div class="vs"></div></div><div class="hs"></div></div></div>
</div>
</div>
</div>
</section>

</main>
</body>
</html>
```
FILE: styles.css
```css
* { box-sizing: border-box; }
html, body { margin: 0; padding: 0; background: #000; }
body { font-family: "Noto Sans", "Open Sans", sans-serif; color: #d6d8dc; overflow: hidden; }
.sprite { display: none; }
.app { display: grid; grid-template-columns: 1728px 1728px; grid-template-rows: 1017px 1017px; width: 3456px; height: 2034px; }

.win { position: relative; overflow: hidden; padding-top: 37px; background: #000; display: flex; flex-direction: column; }
.label { position: absolute; left: 30px; top: 30px; height: 71px; padding: 0 26px; border-radius: 13px; background: #00e0c4; color: #0d1a2c; font: 400 55px/71px "Liberation Sans", Arial, sans-serif; z-index: 5; }
.lnarrow { width: 208px; }
.lnarrow span { display: inline-block; transform: scaleX(.735); transform-origin: left center; }
.dot { position: absolute; left: 1710px; top: 14px; width: 5px; height: 6px; border-radius: 50%; background: #3f83e0; }
.d3 { background: #8fb4e6; }

.tbar { height: 23px; flex: none; background: #3375cc; border-bottom: 1px solid #3f84dc; display: flex; align-items: center; padding-left: 1px; }
.appic { width: 16px; height: 17px; }
.app-b { fill: #111; }
.app-w { fill: #f2f2f2; }
.app-l { stroke: #222; stroke-width: 1; fill: none; }
.ttl { margin-left: 4px; font-size: 12px; color: #fff; }
.wc { margin-left: auto; display: flex; }
.wc svg { width: 46.5px; height: 11px; fill: none; stroke: #f4f6fa; stroke-width: 1; }

.menu { height: 32px; flex: none; background: #1a1c20; padding-left: 8px; font-size: 11.5px; line-height: 29px; color: #d6d8dc; }
.main { flex: 1; min-height: 0; display: flex; background: #1a1c20; }

.side { width: 412px; flex: none; margin-left: 9px; display: flex; flex-direction: column; min-height: 0; }
.stabs { display: flex; gap: 4px; padding-left: 4px; height: 38px; flex: none; }
.tab { display: flex; align-items: center; padding: 0 17px; font-size: 11.8px; font-weight: 600; color: #e2e4e8; border-bottom: 2px solid #25282f; }
.tab.act { background: #252830; color: #3a7bd5; border-bottom-color: #3375cc; }
.stabs .tab { width: 137px; padding-left: 17px; }
.stabs .tab + .tab { width: 134px; }

.sframe { flex: 1; min-height: 0; margin-top: 1px; border: 1px solid #24272d; border-bottom: 0; display: flex; padding-left: 11px; border-radius: 3px 3px 0 0; overflow: hidden; }
.sscroll { width: 381px; flex: none; padding-top: 6px; }
.sb { width: 7px; height: 210px; margin: 11px 0 0 8px; background: #24272e; border-radius: 3px; flex: none; }
.sb-s { height: 195px; }

.head { height: 28px; background: #2b2f38; border-radius: 3px; display: flex; align-items: center; font-size: 11.4px; font-weight: 600; color: #d9dbdf; padding-left: 10px; }
.chev { width: 10px; height: 10px; margin-right: 7px; fill: none; stroke: #c2c5cb; stroke-width: 1.6; }
.head.sub { margin-top: 18px; padding-left: 10px; }
.head.opt { margin-top: 12px; height: 27px; }

.grp { border: 1px solid #25282e; border-radius: 4px; }
.docs { margin-top: 14px; padding: 0 11px 11px; }
.gt { width: fit-content; height: 20px; margin: -10px 0 0 -6px; padding: 0 8px; background: #1a1c20; font-size: 14.6px; font-weight: 600; line-height: 20px; color: #e4e6ea; white-space: nowrap; }
.docs > .gt { margin-left: -5px; }
.list { height: 78px; margin: 1px 2px 0; background: #101215; border: 1px solid #1f2227; border-radius: 3px; padding: 1px; }
.tall-list { height: 190px; }
.li { height: 23px; background: #16181d; font-size: 11.8px; line-height: 22px; padding-left: 8px; color: #c6c8cc; }
.brow { display: flex; gap: 6px; margin-top: 7px; }
.brow .btn { flex: 1; height: 25px; }
.brow2 { display: flex; gap: 6px; margin-top: 5px; }
.btn { border: 0; border-radius: 3px; font: 400 11.6px "Noto Sans", sans-serif; padding: 0; }
.pri { background: #3375cc; color: #f2f5fa; }
.sec { background: #24272e; border: 1px solid #383b43; color: #c8cacf; }
.rm { width: 55px; height: 26px; }
.ca { width: 56px; height: 26px; }

.big { margin-top: 7px; padding: 18px 9px 30px 10px; }
.in { margin-bottom: 23px; padding: 0 13px 13px 13px; }
.ner { padding-bottom: 10px; }
.lb { height: 16px; margin-top: 9px; padding-left: 2px; font-size: 12.2px; line-height: 16px; color: #c6c8cc; white-space: nowrap; }
.ml { margin-top: 17px; }
.cb { height: 33px; margin-top: 10px; background: #121418; border: 1px solid #1e2126; border-radius: 3px; padding-left: 5px; font-size: 12.2px; line-height: 31px; color: #c6c8cc; white-space: nowrap; overflow: hidden; }
.tall { height: 40px; line-height: 42px; padding-left: 10px; }
.mc { height: 40px; line-height: 38px; padding-left: 10px; }
.note { height: 16px; margin-top: 11px; padding-left: 2px; font-size: 12px; line-height: 16px; color: #666a70; }
.autom { margin-top: 17px; }
.ck { display: flex; align-items: center; height: 16px; margin-top: 5px; font-size: 12.2px; color: #c6c8cc; }
.box { width: 15px; height: 15px; margin-right: 7px; background: #15171a; border: 1px solid #5b5e65; border-radius: 3px; flex: none; font-size: 11px; line-height: 13px; text-align: center; color: #fff; font-weight: 700; }
.box.on { background: #3375cc; border-color: #3375cc; }
.leg { margin-top: 14px; }
.sl { display: flex; align-items: center; height: 16px; margin-top: 13px; margin-left: -2px; }
.track { position: relative; width: 295px; height: 4px; background: #1f2b3e; border-radius: 2px; }
.fill { width: 106px; height: 4px; background: #3375cc; border-radius: 2px; }
.knob { position: absolute; left: 98px; top: -6px; width: 16px; height: 16px; border-radius: 50%; background: #3a7bd5; }
.val { margin: 5px 0 0 10px; font-size: 12.2px; color: #c6c8cc; }

.split { width: 7px; flex: none; margin-left: 3px; background: #252830; }
.content { width: 1297px; flex: none; display: flex; flex-direction: column; padding: 7px 10px 0 12px; min-height: 0; }
.chead { height: 37px; flex: none; display: flex; align-items: center; padding-left: 3px; }
.ctitle { margin: 0; font-size: 15.8px; font-weight: 600; color: #e8eaed; }
.cfile { margin-left: 8px; padding-left: 9px; border-left: 1px solid #8b8d92; height: 16px; font-size: 11.8px; line-height: 15px; color: #c0c2c6; }
.acts { margin-left: auto; display: flex; gap: 4px; align-items: center; margin-right: -1px; }
.big1 { width: 91px; height: 35px; font-size: 12.4px; }
.big2 { width: 65px; height: 35px; font-size: 12.4px; }
.big3 { width: 56px; height: 37px; font-size: 12.4px; }
.ctabs { height: 38px; flex: none; margin-top: 3px; padding-left: 2px; display: flex; gap: 4px; }
.ctabs .tab:nth-child(1) { width: 98px; }
.ctabs .tab:nth-child(2) { width: 136px; }
.ctabs .tab:nth-child(3), .ctabs .tab:nth-child(4) { width: 76px; }
.ctabs .tab { padding: 0 0 0 17px; }

.frame { flex: 1; min-height: 0; display: flex; border: 1px solid #24272d; border-bottom: 0; border-radius: 3px 3px 0 0; padding: 21px 12px 6px; }
.vg { width: 618px; flex: none; display: flex; flex-direction: column; border: 1px solid #25282e; border-radius: 4px; padding: 0 12px 11px 11px; }
.vg:last-child { width: 617px; padding-left: 12px; padding-right: 12px; }
.vg > .gt { margin-left: -6px; }
.vsplit { width: 7px; flex: none; margin: -9px 4px -6px 3px; background: #252830; }

.tb { height: 24px; flex: none; margin-top: 9px; padding: 0 3px; display: flex; align-items: center; gap: 6px; }
.tr { margin-left: auto; display: flex; gap: 4px; align-items: center; }
.tbtn { width: 24px; height: 24px; padding: 0; background: #2b2f38; border: 1px solid #3a3e47; border-radius: 4px; color: #d6d8dc; font: 600 13px/20px "Noto Sans", sans-serif; display: flex; align-items: center; justify-content: center; }
.tbtn svg { width: 14px; height: 14px; fill: none; stroke: #d0d2d6; stroke-width: 1.2; }
.tbtn.on { background: #1c2027; border-color: #2f74d0; }
.tbtn.on svg { stroke: #3a7bd5; }
.tbtn.dim { background: #24272e; border-color: #2b2e36; }
.tbtn.dim svg { stroke: #7c7f86; }
.tbtn.lit svg { stroke: #dfe1e5; }
.gp { margin-left: 6px; }
.zf { width: 53px; height: 24px; background: #111316; border: 1px solid #20232a; border-radius: 4px; text-align: center; font-size: 11.8px; line-height: 22px; color: #c0c2c6; }
.pg { width: 37px; height: 24px; background: #111316; border: 1px solid #20232a; border-radius: 4px; text-align: center; font-size: 11.8px; line-height: 23px; color: #c8cacf; }
.cnt { width: 23px; margin-left: 5px; font-size: 11.8px; color: #777a80; white-space: nowrap; }

.view { flex: 1; min-height: 0; margin-top: 11px; border: 1px solid #24272d; border-radius: 3px; padding: 7px 3px 0 7px; background: #15171a; display: flex; flex-direction: column; }
.vrow { display: flex; }
.vs { width: 5px; height: 236px; margin: 1px 0 0 6px; background: #24272e; border-radius: 3px; flex: none; }
.hs { width: 569px; height: 5px; margin-top: 2px; background: #24272e; border-radius: 3px; }

.page { width: 571px; height: 729px; flex: none; background: #fff; border-top: 1px solid #999; padding: 55px 56px 0 56px; color: #333; overflow: hidden; }
.ban { height: 22px; background: #22385a; border-top: 1px solid #3a5580; padding-left: 9px; font-size: 8.2px; font-weight: 500; letter-spacing: .72px; line-height: 20px; color: #e2e8f0; white-space: nowrap; }
.dt { margin: 15px 0 0; font-size: 14.6px; font-weight: 700; line-height: 24px; color: #15202e; }
.ds { margin: 4px 0 0; height: 12px; font-size: 8.1px; line-height: 12px; color: #777; white-space: nowrap; }
h3 { margin: 15px 0 0; padding-bottom: 3px; border-bottom: 2px solid #d8dbe2; font-size: 10.1px; font-weight: 700; line-height: 16px; color: #1f3864; height: 21px; }
h3.sec1 { border-bottom: 1px solid #c9ccd6; height: 20px; margin-top: 17px; }
.rows { margin: 2.600px 0 0; display: grid; grid-template-columns: 142px 1fr; grid-auto-rows: 18.800px; align-items: center; font-size: 10.1px; line-height: 12px; }
dt { color: #333; white-space: nowrap; }
dd { margin: 0; color: #444; white-space: nowrap; }
.bar { display: inline-block; height: 11px; background: #000; vertical-align: -2px; }
.ds .bar { height: 10px; }
.slot { display: inline-block; width: 107px; }
dd.ph, .ph { font: 400 8.600px "Liberation Sans", Arial, sans-serif; color: #222; }
.ph.ph7 { font-size: 7.500px; }
dd.ph5 { font-size: 5px; color: #555; }
dd.ph3 { font-size: 3.200px; color: #777; }
dd.mk, .mk { font: 400 10px/12px "Liberation Sans", Arial, sans-serif; color: #111; white-space: pre; letter-spacing: 0; vertical-align: -2px; }
.mk.mk-s { font-size: 8.800px; color: #333; }
mark { color: #666; padding: 0 1px; margin: 0 -1px; }
mark.g { background: #e8e8e8; }
mark.n { background: #f1efec; color: #777; }
mark.o { background: #fdf3e3; color: #8d8068; }
```
